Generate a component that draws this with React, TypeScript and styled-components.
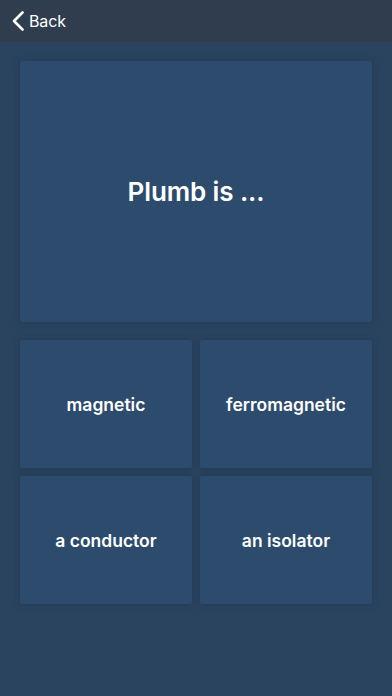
import React from "react";
import styled, { createGlobalStyle } from "styled-components";

const Global = createGlobalStyle`
  html, body { margin: 0; padding: 0; }
  body {
    background: #2a4460;
    font-family: Inter, "Open Sans", "Liberation Sans", sans-serif;
    -webkit-font-smoothing: antialiased;
  }
`;

const Page = styled.div`
  width: 392px;
  height: 696px;
  display: flex;
  flex-direction: column;
  background: #2a4460;
`;

const NavBar = styled.header`
  height: 42px;
  flex: none;
  display: flex;
  align-items: center;
  padding: 0 0 0 12px;
  background: #2f3d4e;
  box-sizing: border-box;
`;

const BackButton = styled.button`
  display: flex;
  align-items: center;
  gap: 5px;
  background: none;
  border: none;
  padding: 0;
  color: #ffffff;
  font-family: inherit;
  font-size: 16px;
  font-weight: 400;
  letter-spacing: -0.1px;
  cursor: pointer;
`;

const Content = styled.main`
  display: flex;
  flex-direction: column;
  gap: 18px;
  padding: 19px 20px 0;
`;

const Card = styled.div<{ $h: number }>`
  height: ${(p) => p.$h}px;
  display: flex;
  align-items: center;
  justify-content: center;
  background: #2c4b6d;
  border-radius: 2px;
  box-shadow: 0 0 6px rgba(20, 35, 55, 0.35);
  color: #ffffff;
`;

const Question = styled.h1`
  margin: 0;
  font-size: 26px;
  font-weight: 600;
  letter-spacing: -0.1px;
`;

const AnswerGrid = styled.div`
  display: grid;
  grid-template-columns: 1fr 1fr;
  gap: 8px;
`;

const Answer = styled.span`
  font-size: 17.5px;
  font-weight: 600;
`;

const Chevron = () => (
  <svg width="12" height="20" viewBox="0 0 12 20" fill="none">
    <path d="M10.5 1.5 L2 10 L10.5 18.5" stroke="#ffffff" strokeWidth="2.6" strokeLinecap="round" strokeLinejoin="round" />
  </svg>
);

const answers = ["magnetic", "ferromagnetic", "a conductor", "an isolator"];

export default function App() {
  return (
    <>
      <Global />
      <Page>
        <NavBar>
          <BackButton>
            <Chevron />
            Back
          </BackButton>
        </NavBar>
        <Content>
          <Card $h={261}>
            <Question>Plumb is ...</Question>
          </Card>
          <AnswerGrid>
            {answers.map((a) => (
              <Card key={a} $h={128}>
                <Answer>{a}</Answer>
              </Card>
            ))}
          </AnswerGrid>
        </Content>
      </Page>
    </>
  );
}
